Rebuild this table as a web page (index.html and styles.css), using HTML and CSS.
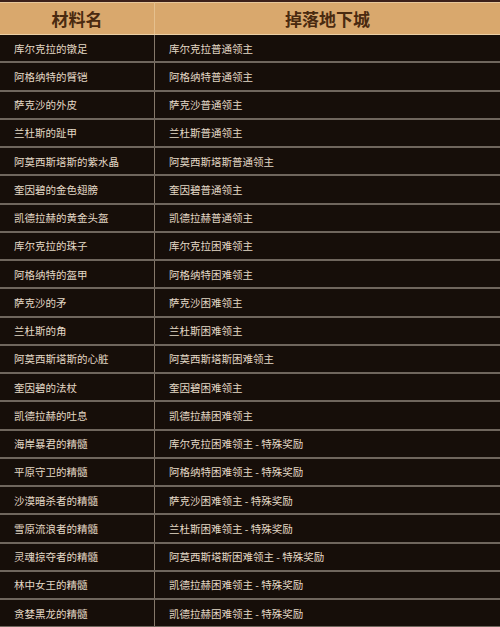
FILE: index.html
```html
<!DOCTYPE html>
<html lang="zh">
<head>
<meta charset="utf-8">
<link rel="stylesheet" href="styles.css">
</head>
<body>
<div class="table">
  <div class="row head"><div class="cell">材料名</div><div class="cell">掉落地下城</div></div>
  <div class="row"><div class="cell">库尔克拉的镦足</div><div class="cell">库尔克拉普通领主</div></div>
  <div class="row"><div class="cell">阿格纳特的臂铠</div><div class="cell">阿格纳特普通领主</div></div>
  <div class="row"><div class="cell">萨克沙的外皮</div><div class="cell">萨克沙普通领主</div></div>
  <div class="row"><div class="cell">兰杜斯的趾甲</div><div class="cell">兰杜斯普通领主</div></div>
  <div class="row"><div class="cell">阿莫西斯塔斯的紫水晶</div><div class="cell">阿莫西斯塔斯普通领主</div></div>
  <div class="row"><div class="cell">奎因碧的金色翅膀</div><div class="cell">奎因碧普通领主</div></div>
  <div class="row"><div class="cell">凯德拉赫的黄金头盔</div><div class="cell">凯德拉赫普通领主</div></div>
  <div class="row"><div class="cell">库尔克拉的珠子</div><div class="cell">库尔克拉困难领主</div></div>
  <div class="row"><div class="cell">阿格纳特的盔甲</div><div class="cell">阿格纳特困难领主</div></div>
  <div class="row"><div class="cell">萨克沙的矛</div><div class="cell">萨克沙困难领主</div></div>
  <div class="row"><div class="cell">兰杜斯的角</div><div class="cell">兰杜斯困难领主</div></div>
  <div class="row"><div class="cell">阿莫西斯塔斯的心脏</div><div class="cell">阿莫西斯塔斯困难领主</div></div>
  <div class="row"><div class="cell">奎因碧的法杖</div><div class="cell">奎因碧困难领主</div></div>
  <div class="row"><div class="cell">凯德拉赫的吐息</div><div class="cell">凯德拉赫困难领主</div></div>
  <div class="row"><div class="cell">海岸暴君的精髓</div><div class="cell">库尔克拉困难领主 - 特殊奖励</div></div>
  <div class="row"><div class="cell">平原守卫的精髓</div><div class="cell">阿格纳特困难领主 - 特殊奖励</div></div>
  <div class="row"><div class="cell">沙漠暗杀者的精髓</div><div class="cell">萨克沙困难领主 - 特殊奖励</div></div>
  <div class="row"><div class="cell">雪原流浪者的精髓</div><div class="cell">兰杜斯困难领主 - 特殊奖励</div></div>
  <div class="row"><div class="cell">灵魂掠夺者的精髓</div><div class="cell">阿莫西斯塔斯困难领主 - 特殊奖励</div></div>
  <div class="row"><div class="cell">林中女王的精髓</div><div class="cell">凯德拉赫困难领主 - 特殊奖励</div></div>
  <div class="row"><div class="cell">贪婪黑龙的精髓</div><div class="cell">凯德拉赫困难领主 - 特殊奖励</div></div>
</div>
</body>
</html>
```
FILE: styles.css
```css
html, body {
  margin: 0;
  padding: 0;
  background: #160e09;
}
body {
  width: 500px;
  height: 627px;
  overflow: hidden;
  font-family: "Noto Sans CJK SC", "Noto Sans", sans-serif;
}
.table {
  display: flex;
  flex-direction: column;
}
.row {
  display: grid;
  grid-template-columns: 155px 1fr;
  height: 28.26px;
  box-sizing: border-box;
  border-bottom: 2px solid #6f665d;
  background: #160e09;
}
.row .cell {
  display: flex;
  align-items: center;
  padding-left: 14px;
  font-size: 10.5px;
  color: #e4d9c6;
  white-space: nowrap;
}
.row .cell:first-child {
  border-right: 1px solid #85786a;
}
.row.head {
  height: 35px;
  background: #d9a86d;
  border-top: 2px solid #3c201a;
  border-bottom: 1px solid #ecd0a6;
  box-shadow: inset 0 1px 0 #e8c79a;
}
.row.head .cell {
  justify-content: center;
  padding-left: 0;
  font-size: 17px;
  font-weight: bold;
  color: #4a2a10;
}
.row.head .cell:first-child {
  border-right: 1px solid #e5c08e;
}
```
